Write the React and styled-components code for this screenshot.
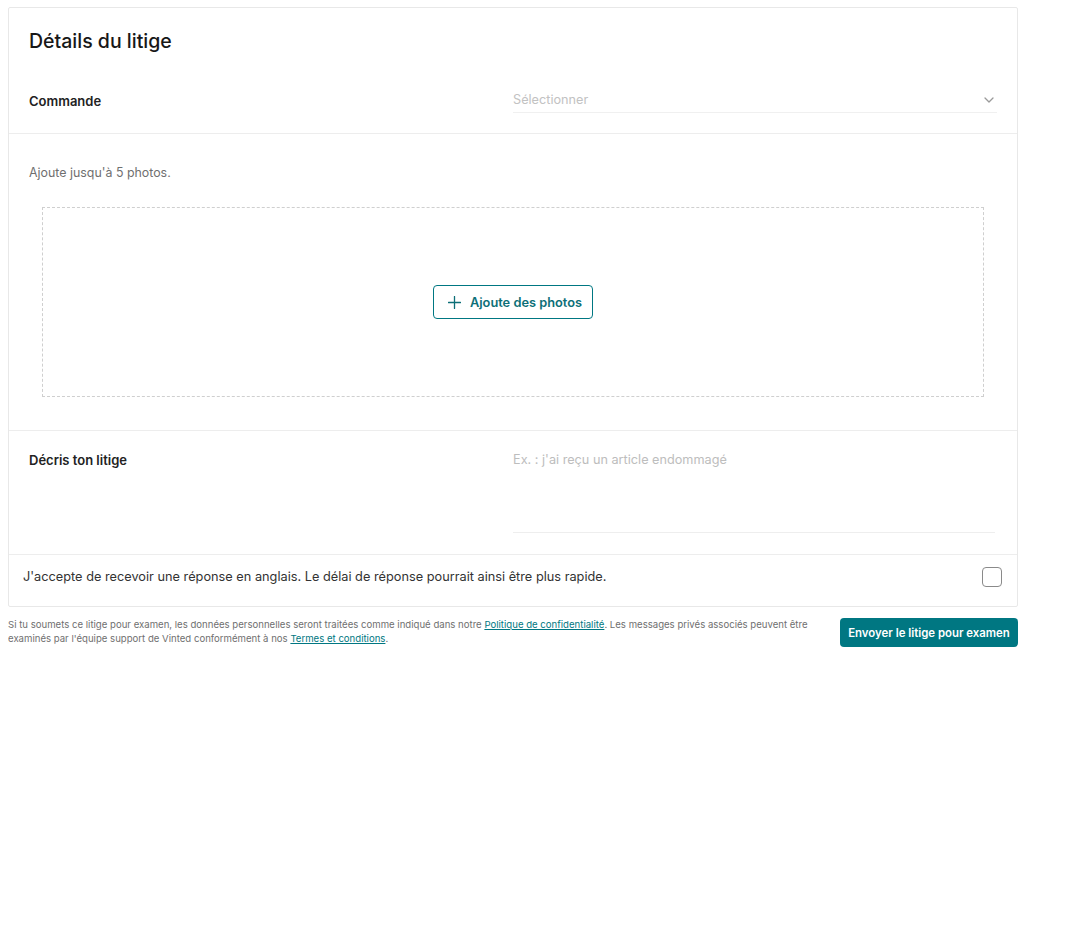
import React from "react";
import styled, { createGlobalStyle } from "styled-components";

const Global = createGlobalStyle`
  body {
    margin: 7px 8px 8px;
    background: #fff;
    font-family: Inter, "Noto Sans", Arial, sans-serif;
    color: #171717;
  }
  * { box-sizing: border-box; }
`;

const Page = styled.div`
  width: 1010px;
`;

const Card = styled.div`
  border: 1px solid #e8e8e8;
  border-radius: 2px;
  background: #fff;
`;

const Title = styled.h2`
  margin: 0;
  padding: 21px 20px 0;
  font-size: 19.5px;
  line-height: 24px;
  font-weight: 500;
  color: #171717;
`;

const FieldRow = styled.div`
  display: grid;
  grid-template-columns: 1fr 1fr;
  align-items: ${(p) => (p.$top ? "start" : "center")};
  padding: ${(p) => p.$pad};
  border-bottom: 1px solid #ededed;
`;

const Label = styled.div`
  font-size: 13px;
  line-height: 20px;
  font-weight: 600;
  color: #222;
`;

const Select = styled.div`
  display: flex;
  align-items: center;
  justify-content: space-between;
  height: 25px;
  border-bottom: 1px solid #f0f0f0;
  padding-bottom: 1px;
  font-size: 12.7px;
  color: #c2c2c2;
`;

const TextArea = styled.div`
  height: 83px;
  margin-right: 2px;
  border-bottom: 1px solid #eeeeee;
  font-size: 12.7px;
  line-height: 20px;
  color: #bdbdbd;
`;

const PhotoSection = styled.div`
  padding: 31px 20px 33px;
  border-bottom: 1px solid #ededed;
`;

const Hint = styled.div`
  font-size: 12.4px;
  line-height: 16px;
  color: #6f6f6f;
  margin-bottom: 26px;
`;

const DropZone = styled.div`
  margin: 0 13px;
  height: 190px;
  border: 1px dashed #cfcfcf;
  display: flex;
  align-items: center;
  justify-content: center;
`;

const OutlineButton = styled.button`
  display: flex;
  align-items: center;
  gap: 9px;
  height: 34px;
  width: 160px;
  justify-content: center;
  background: #fff;
  border: 1px solid #007782;
  border-radius: 4px;
  color: #0d6f78;
  font-family: inherit;
  font-size: 12.8px;
  font-weight: 600;
  padding: 0 0 0 4px;
  cursor: pointer;
`;

const CheckRow = styled.label`
  display: flex;
  align-items: center;
  justify-content: space-between;
  padding: 12px 14px 19px;
  font-size: 12.75px;
  line-height: 20px;
  color: #333;
`;

const Box = styled.span`
  width: 20px;
  height: 20px;
  border: 1px solid #8a8a8a;
  border-radius: 4px;
  margin-right: 1px;
`;

const Footer = styled.div`
  display: flex;
  align-items: flex-start;
  justify-content: space-between;
  gap: 30px;
  margin-top: 11px;
`;

const Legal = styled.p`
  margin: 0;
  flex: 1;
  max-width: 805px;
  font-size: 9.6px;
  line-height: 14px;
  color: #6f6f6f;
`;

const Link = styled.a`
  color: #007782;
  text-decoration: underline;
`;

const PrimaryButton = styled.button`
  height: 29px;
  width: 178px;
  flex-shrink: 0;
  white-space: nowrap;
  background: #007782;
  color: #fff;
  border: none;
  border-radius: 4px;
  font-family: inherit;
  font-size: 11.4px;
  font-weight: 600;
  padding: 0;
  cursor: pointer;
`;

const Chevron = () => (
  <svg width="12" height="12" viewBox="0 0 12 12" fill="none" style={{ marginRight: 2 }}>
    <path d="M2 4l4 4 4-4" stroke="#9a9a9a" strokeWidth="1.3" strokeLinecap="round" strokeLinejoin="round" />
  </svg>
);

const Plus = () => (
  <svg width="13" height="13" viewBox="0 0 13 13" fill="none">
    <path d="M6.5 0.5v12M0.5 6.5h12" stroke="#0d6f78" strokeWidth="1.3" strokeLinecap="round" />
  </svg>
);

export default function App() {
  return (
    <Page>
      <Global />
      <Card>
        <Title>Détails du litige</Title>
        <FieldRow $pad="35px 20px 20px">
          <Label>Commande</Label>
          <Select>
            <span>Sélectionner</span>
            <Chevron />
          </Select>
        </FieldRow>
        <PhotoSection>
          <Hint>Ajoute jusqu'à 5 photos.</Hint>
          <DropZone>
            <OutlineButton>
              <Plus />
              Ajoute des photos
            </OutlineButton>
          </DropZone>
        </PhotoSection>
        <FieldRow $top $pad="19px 20px 21px 20px">
          <Label>Décris ton litige</Label>
          <TextArea>Ex. : j'ai reçu un article endommagé</TextArea>
        </FieldRow>
        <CheckRow>
          <span>J'accepte de recevoir une réponse en anglais. Le délai de réponse pourrait ainsi être plus rapide.</span>
          <Box />
        </CheckRow>
      </Card>
      <Footer>
        <Legal>
          Si tu soumets ce litige pour examen, les données personnelles seront traitées comme indiqué dans notre{" "}
          <Link href="#">Politique de confidentialité</Link>. Les messages privés associés peuvent être examinés par
          l'équipe support de Vinted conformément à nos <Link href="#">Termes et conditions</Link>.
        </Legal>
        <PrimaryButton>Envoyer le litige pour examen</PrimaryButton>
      </Footer>
    </Page>
  );
}
